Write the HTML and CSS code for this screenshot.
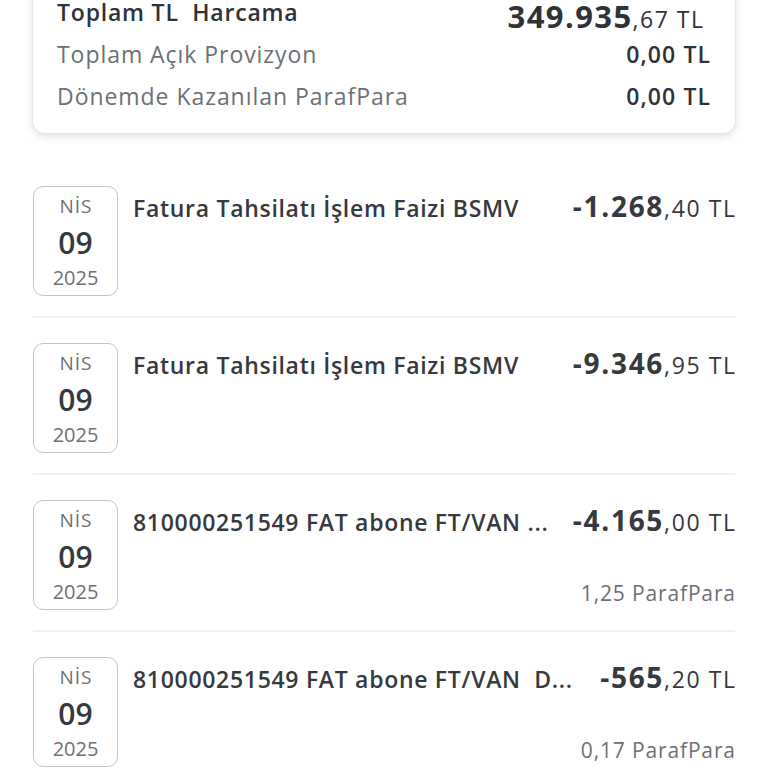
FILE: index.html
```html
<!DOCTYPE html>
<html lang="tr">
<head>
<meta charset="utf-8">
<link rel="stylesheet" href="styles.css">
</head>
<body>
<div class="page">
  <div class="summary">
    <div class="srow srow-main">
      <span class="slabel strong">Toplam TL&nbsp; Harcama</span>
      <span class="big-amount"><b>349.935</b>,67 TL</span>
    </div>
    <div class="srow">
      <span class="slabel">Toplam Açık Provizyon</span>
      <span class="svalue">0,00 TL</span>
    </div>
    <div class="srow">
      <span class="slabel">Dönemde Kazanılan ParafPara</span>
      <span class="svalue">0,00 TL</span>
    </div>
  </div>

  <div class="tx">
    <div class="date"><span class="mon">NİS</span><span class="day">09</span><span class="year">2025</span></div>
    <div class="txbody">
      <div class="txtop"><span class="title">Fatura Tahsilatı İşlem Faizi BSMV</span><span class="amount"><b>-1.268</b>,40 TL</span></div>
    </div>
  </div>
  <div class="tx">
    <div class="date"><span class="mon">NİS</span><span class="day">09</span><span class="year">2025</span></div>
    <div class="txbody">
      <div class="txtop"><span class="title">Fatura Tahsilatı İşlem Faizi BSMV</span><span class="amount"><b>-9.346</b>,95 TL</span></div>
    </div>
  </div>
  <div class="tx">
    <div class="date"><span class="mon">NİS</span><span class="day">09</span><span class="year">2025</span></div>
    <div class="txbody">
      <div class="txtop"><span class="title">810000251549 FAT abone FT/VAN ...</span><span class="amount"><b>-4.165</b>,00 TL</span></div>
      <div class="points">1,25 ParafPara</div>
    </div>
  </div>
  <div class="tx">
    <div class="date"><span class="mon">NİS</span><span class="day">09</span><span class="year">2025</span></div>
    <div class="txbody">
      <div class="txtop"><span class="title">810000251549 FAT abone FT/VAN  D...</span><span class="amount"><b>-565</b>,20 TL</span></div>
      <div class="points">0,17 ParafPara</div>
    </div>
  </div>
</div>
</body>
</html>
```

FILE: styles.css
```css
html, body {
  margin: 0;
  padding: 0;
  background: #ffffff;
}
body {
  font-family: "Open Sans", "Noto Sans", sans-serif;
  color: #36393e;
  overflow: hidden;
  height: 768px;
}
.page {
  padding: 0 33px;
}
.summary {
  margin-top: -30px;
  background: #ffffff;
  border-radius: 0 0 12px 12px;
  box-shadow: 0 3px 8px rgba(0, 0, 0, 0.14), 0 0 2px rgba(0, 0, 0, 0.08);
  padding: 30px 25px 16px 24px;
  margin-bottom: 53px;
}
.srow {
  display: flex;
  justify-content: space-between;
  align-items: center;
  height: 42px;
}
.srow-main {
  height: 33px;
  align-items: flex-start;
  padding-right: 7px;
}
.slabel {
  font-size: 23px;
  color: #6c7075;
  line-height: 42px;
  letter-spacing: 0.95px;
}
.slabel.strong {
  color: #2f3237;
  font-weight: 600;
  line-height: 24px;
  letter-spacing: 0.8px;
}
.big-amount {
  font-size: 23px;
  color: #2f3237;
  line-height: 40px;
  margin-top: -4px;
  letter-spacing: 1.5px;
  margin-right: -1.5px;
}
.big-amount b {
  font-size: 31px;
  font-weight: 700;
  letter-spacing: 1.4px;
}
.svalue {
  font-size: 23px;
  font-weight: 600;
  color: #2f3237;
  letter-spacing: 1.1px;
  margin-right: -1.1px;
}
.tx {
  display: flex;
  gap: 15px;
  padding: 0 0 20px;
  margin-top: 25px;
  border-bottom: 2px solid #eef0f2;
}
.tx:first-of-type {
  margin-top: 0;
}
.date {
  flex: 0 0 auto;
  width: 83px;
  height: 104px;
  padding-top: 4px;
  box-sizing: content-box;
  border: 1px solid #c2c4c6;
  border-radius: 10px;
  display: flex;
  flex-direction: column;
  align-items: center;
  justify-content: flex-start;
}
.mon {
  font-size: 19px;
  color: #6c7075;
  line-height: 30px;
  letter-spacing: 1px;
  margin-right: -1px;
}
.day {
  font-size: 30px;
  font-weight: 600;
  color: #36393e;
  line-height: 44px;
}
.year {
  font-size: 20px;
  color: #6c7075;
  line-height: 26px;
}
.txbody {
  flex: 1;
  display: flex;
  flex-direction: column;
}
.txtop {
  display: flex;
  justify-content: space-between;
  align-items: baseline;
  gap: 12px;
  padding-top: 1px;
}
.title {
  font-size: 23px;
  font-weight: 600;
  color: #36393e;
  white-space: pre;
  letter-spacing: 0.7px;
}
.amount {
  font-size: 23px;
  color: #36393e;
  white-space: nowrap;
  letter-spacing: 1.6px;
  margin-right: -1.6px;
}
.amount b {
  font-size: 28px;
  font-weight: 700;
  letter-spacing: 1.7px;
}
.points {
  margin-top: auto;
  text-align: right;
  font-size: 21px;
  color: #6c7075;
  line-height: 26px;
  padding-bottom: 4px;
  letter-spacing: 0.85px;
  margin-right: -0.85px;
}
```
